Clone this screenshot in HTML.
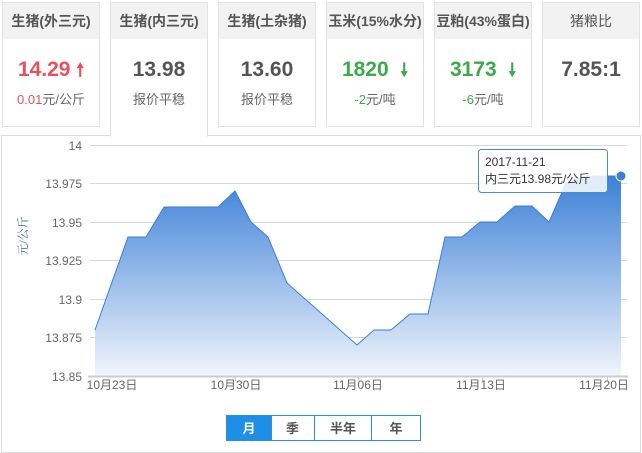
<!DOCTYPE html><html><head><meta charset="utf-8"><style>
body{margin:0;width:642px;height:453px;background:#fff;font-family:"Liberation Sans","Noto Sans CJK SC",sans-serif;position:relative;overflow:hidden}
.c{position:absolute;top:2px;width:96px;height:123px;border:1px solid #e2e2e2;background:#fff;text-align:center}
.c .h{height:36px;line-height:36px;background:#f2f2f2;font-size:14px;font-weight:bold;color:#555}
.c .v{margin-top:18px;font-size:21px;font-weight:bold;color:#555;line-height:26px}
.c .s{margin-top:6px;font-size:13px;color:#666}
.red{color:#e8505b!important}.grn{color:#3caa4a!important}
.sel{height:134px;border-bottom:none;z-index:2}
.panel{position:absolute;left:1px;top:135px;width:638px;height:316px;border:1px solid #ddd}
.btn{position:absolute;top:415px;height:26px;line-height:26px;text-align:center;font-size:13px;font-weight:bold;color:#555;border:1px solid #2a8fdc;box-sizing:border-box}
</style></head><body>
<div class="c" style="left:2px"><div class="h">生猪(外三元)</div><div class="v red">14.29 <span style="font-size:18px">🠕</span></div><div class="s"><span class="red">0.01</span>元/公斤</div></div>
<div class="c sel" style="left:110px"><div class="h">生猪(内三元)</div><div class="v">13.98</div><div class="s">报价平稳</div></div>
<div class="c" style="left:218px"><div class="h">生猪(土杂猪)</div><div class="v">13.60</div><div class="s">报价平稳</div></div>
<div class="c" style="left:326px"><div class="h">玉米(15%水分)</div><div class="v grn">1820 &nbsp;<span style="font-size:18px">🠗</span></div><div class="s"><span class="grn">-2</span>元/吨</div></div>
<div class="c" style="left:434px"><div class="h">豆粕(43%蛋白)</div><div class="v grn">3173 &nbsp;<span style="font-size:18px">🠗</span></div><div class="s"><span class="grn">-6</span>元/吨</div></div>
<div class="c" style="left:542px"><div class="h" style="font-weight:normal">猪粮比</div><div class="v">7.85:1</div></div>
<div class="panel"></div>
<svg style="position:absolute;left:0;top:0" width="642" height="453">
<defs><linearGradient id="g" x1="0" y1="0" x2="0" y2="1"><stop offset="0" stop-color="#3c80d6"/><stop offset="1" stop-color="#f1f5fc"/></linearGradient></defs>
<g stroke="#d8d8d8" stroke-width="1">
<line x1="90" y1="145.5" x2="627" y2="145.5"/><line x1="90" y1="183.5" x2="627" y2="183.5"/><line x1="90" y1="222.5" x2="627" y2="222.5"/><line x1="90" y1="260.5" x2="627" y2="260.5"/><line x1="90" y1="299.5" x2="627" y2="299.5"/><line x1="90" y1="337.5" x2="627" y2="337.5"/></g>
<path d="M95,330 L128,237 L146,237 L164,207 L218,207 L235,191 L251,222 L268,237 L287,283 L357,345 L374,330 L391,330 L410,314 L428,314 L445,237 L462,237 L480,222 L497,222 L515,206 L532,206 L549,222 L566,183 L586,176 L621,176 L621,376 L95,376Z" fill="url(#g)"/>
<path d="M95,330 L128,237 L146,237 L164,207 L218,207 L235,191 L251,222 L268,237 L287,283 L357,345 L374,330 L391,330 L410,314 L428,314 L445,237 L462,237 L480,222 L497,222 L515,206 L532,206 L549,222 L566,183 L586,176 L621,176" fill="none" stroke="#3a7fd5" stroke-width="1"/>
<line x1="88" y1="376.5" x2="628" y2="376.5" stroke="#ccc" stroke-width="2"/>
<g stroke="#ccc"><line x1="235.5" y1="376" x2="235.5" y2="381"/><line x1="358.5" y1="376" x2="358.5" y2="381"/><line x1="482.5" y1="376" x2="482.5" y2="381"/><line x1="607.5" y1="376" x2="607.5" y2="381"/></g>
<circle cx="621" cy="176" r="5" fill="#3a7fd5" stroke="#fff" stroke-width="1"/>
<g font-family="Liberation Sans" font-size="12" fill="#666" text-anchor="end">
<text x="82" y="150">14</text><text x="82" y="188">13.975</text><text x="82" y="227">13.95</text><text x="82" y="265">13.925</text><text x="82" y="304">13.9</text><text x="82" y="342">13.875</text><text x="82" y="381">13.85</text></g>
<g font-family="Liberation Sans,Noto Sans CJK SC" font-size="12" fill="#666" text-anchor="middle">
<text x="112" y="389">10月23日</text><text x="236" y="389">10月30日</text><text x="358" y="389">11月06日</text><text x="481" y="389">11月13日</text><text x="604" y="389">11月20日</text></g>
<text transform="translate(27,236) rotate(-90)" font-family="Liberation Serif,Noto Serif CJK SC" font-size="12" fill="#3a6ea5" text-anchor="middle">元/公斤</text>
<rect x="478.5" y="149.5" width="129" height="43" rx="3" fill="#fff" fill-opacity="0.85" stroke="#4a8ad6"/>
<text x="485" y="166" font-family="Liberation Sans,Noto Sans CJK SC" font-size="12" fill="#333">2017-11-21</text>
<text x="485" y="183" font-family="Liberation Sans,Noto Sans CJK SC" font-size="12" fill="#333">内三元13.98元/公斤</text>
</svg>
<div class="btn" style="left:226px;width:46px;background:#1e8fe6;color:#fff">月</div>
<div class="btn" style="left:271px;width:44px;border-left:none">季</div>
<div class="btn" style="left:314px;width:58px">半年</div>
<div class="btn" style="left:371px;width:50px">年</div>
</body></html>
